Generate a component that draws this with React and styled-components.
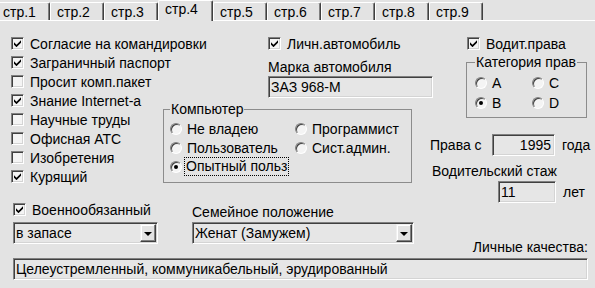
import React from 'react'
import styled, { createGlobalStyle } from 'styled-components'

const GlobalStyle = createGlobalStyle`
  html, body { margin: 0; padding: 0; background: #e3e3e3; }
  body {
    font-family: "Liberation Sans", Arial, sans-serif;
    font-size: 14px;
    color: #000;
  }
`

const Window = styled.div`
  width: 595px;
  height: 288px;
  overflow: hidden;
  background: #e3e3e3;
  display: flex;
  flex-direction: column;
`

const TabBar = styled.div`
  display: flex;
  align-items: flex-end;
  height: 21px;
  box-sizing: border-box;
  margin-left: -4px;
  border-bottom: 1px solid #fff;
`

const Tab = styled.div`
  position: relative;
  box-sizing: border-box;
  flex: none;
  width: ${p => (p.$active ? 55 : 54)}px;
  height: ${p => (p.$active ? 21 : 18)}px;
  margin-bottom: ${p => (p.$active ? '-1px' : '0')};
  padding: ${p => (p.$active ? '0' : '1px')} 0 0 6px;
  line-height: 16px;
  background: #e3e3e3;
  border-top: 1px solid #fff;
  border-left: 1px solid #fff;
  border-right: 1px solid #404040;
  border-radius: 2px 2px 0 0;
  box-shadow: inset -1px 0 #808080;
`

const Body = styled.div`
  flex: 1;
  display: flex;
  flex-direction: column;
  padding: 13px 7px 0 10px;
`

const TopSection = styled.div`
  display: flex;
  height: 169px;
`

const Column = styled.div`
  display: flex;
  flex-direction: column;
  flex: none;
  width: ${p => p.$w}px;
`

const CheckRow = styled.div`
  display: flex;
  align-items: center;
  gap: 6px;
  height: ${p => p.$h || 19}px;
  padding-left: ${p => p.$indent || 0}px;
  white-space: nowrap;
`

const Box = styled.span`
  flex: none;
  width: 13px;
  height: 13px;
  box-sizing: border-box;
  display: flex;
  align-items: center;
  justify-content: center;
  background: #f4f4f4;
  border: 1px solid;
  border-color: #808080 #fff #fff #808080;
  box-shadow: inset 1px 1px #404040, inset -1px -1px #d4d4d4;
`

const Label = styled.div`
  line-height: 16px;
  white-space: nowrap;
  margin-top: ${p => p.$top || 0}px;
  margin-left: ${p => p.$left || 0}px;
  width: ${p => (p.$w ? `${p.$w}px` : 'auto')};
  flex: none;
  text-align: ${p => (p.$right ? 'right' : 'left')};
`

const Field = styled.div`
  box-sizing: border-box;
  flex: none;
  height: 22px;
  width: ${p => (p.$w ? `${p.$w}px` : 'auto')};
  margin-top: ${p => p.$top || 0}px;
  margin-left: ${p => p.$left || 0}px;
  padding: 0 3px 0 2px;
  line-height: 20px;
  white-space: nowrap;
  overflow: hidden;
  text-align: ${p => (p.$right ? 'right' : 'left')};
  background: #e6e6e6;
  border: 1px solid;
  border-color: #808080 #fff #fff #808080;
  box-shadow: inset 1px 1px #404040, inset -1px -1px #d4d4d4;
`

const ComboField = styled(Field)`
  display: flex;
  align-items: center;
  justify-content: space-between;
  padding: 1px 1px 1px 2px;
`

const DropButton = styled.span`
  flex: none;
  box-sizing: border-box;
  width: 16px;
  height: 18px;
  display: flex;
  align-items: center;
  justify-content: center;
  background: #e3e3e3;
  border: 1px solid;
  border-color: #f0f0f0 #404040 #404040 #f0f0f0;
  box-shadow: inset -1px -1px #808080, inset 1px 1px #fff;

  &::after {
    content: '';
    border-left: 4px solid transparent;
    border-right: 4px solid transparent;
    border-top: 4px solid #000;
    margin-top: 1px;
  }
`

const Group = styled.fieldset`
  box-sizing: border-box;
  margin: ${p => p.$top || 0}px 0 0 ${p => p.$left || 0}px;
  width: ${p => p.$w}px;
  height: ${p => p.$h}px;
  padding: ${p => p.$pt || 2}px 0 0 ${p => p.$pl}px;
  border: 1px solid #8c8c8c;
  min-width: 0;

  legend {
    padding: 0 1px;
    line-height: 15px;
  }
`

const RadioGrid = styled.div`
  display: grid;
  grid-template-columns: ${p => p.$col}px auto;
  grid-auto-rows: ${p => p.$row}px;
`

const RadioRow = styled.div`
  display: flex;
  align-items: center;
  gap: 5px;
  white-space: nowrap;
`

const Circle = styled.span`
  flex: none;
  width: 12px;
  height: 12px;
  box-sizing: border-box;
  border-radius: 50%;
  display: flex;
  align-items: center;
  justify-content: center;
  background: #f4f4f4;
  border: 1px solid;
  border-color: #808080 #fff #fff #808080;
  box-shadow: inset 1px 1px #404040;

  &::after {
    content: '';
    display: ${p => (p.$on ? 'block' : 'none')};
    width: 4px;
    height: 4px;
    border-radius: 50%;
    background: #000;
  }
`

const Focus = styled.span`
  margin-left: -2px;
  padding: 1px 1px;
  line-height: 15px;
  outline: 1px dotted #000;
`

const InlineRow = styled.div`
  display: flex;
  align-items: center;
  gap: ${p => p.$gap ?? 7}px;
  margin-top: ${p => p.$top || 0}px;
  margin-left: ${p => p.$left || 0}px;
`

const BottomRow = styled.div`
  display: flex;
`

function Check({ on, children, h, indent }) {
  return (
    <CheckRow $h={h} $indent={indent}>
      <Box>
        {on && (
          <svg width="7" height="7" viewBox="0 0 7 7">
            <polygon points="0,2.3 2.5,4.8 7,0.3 7,2.7 2.5,7.2 0,4.7" fill="#000" />
          </svg>
        )}
      </Box>
      <span>{children}</span>
    </CheckRow>
  )
}

function Radio({ on, children }) {
  return (
    <RadioRow>
      <Circle $on={on} />
      {children}
    </RadioRow>
  )
}

function Combo({ w, top, left, children }) {
  return (
    <ComboField $w={w} $top={top} $left={left}>
      <span>{children}</span>
      <DropButton />
    </ComboField>
  )
}

const tabs = ['стр.1', 'стр.2', 'стр.3', 'стр.4', 'стр.5', 'стр.6', 'стр.7', 'стр.8', 'стр.9']

const options = [
  ['Согласие на командировки', true],
  ['Заграничный паспорт', true],
  ['Просит комп.пакет', false],
  ['Знание Internet-a', true],
  ['Научные труды', false],
  ['Офисная АТС', false],
  ['Изобретения', false],
  ['Курящий', true],
]

export default function App() {
  return (
    <Window>
      <GlobalStyle />
      <TabBar>
        {tabs.map((t, i) => (
          <Tab key={t} $active={i === 3}>{t}</Tab>
        ))}
      </TabBar>
      <Body>
        <TopSection>
          <Column $w={152}>
            {options.map(([text, on]) => (
              <Check key={text} on={on} indent={1}>{text}</Check>
            ))}
          </Column>

          <Column $w={271}>
            <Check on indent={106}>Личн.автомобиль</Check>
            <Label $top={6} $left={106}>Марка автомобиля</Label>
            <Field $w={165} $top={1} $left={106}>ЗАЗ 968-M</Field>
            <Group $w={249} $h={81} $top={4} $left={1} $pl={6}>
              <legend>Компьютер</legend>
              <RadioGrid $col={125} $row={19}>
                <Radio>Не владею</Radio>
                <Radio>Программист</Radio>
                <Radio>Пользователь</Radio>
                <Radio>Сист.админ.</Radio>
                <Radio on><Focus>Опытный польз</Focus></Radio>
              </RadioGrid>
            </Group>
          </Column>

          <Column $w={155}>
            <Check on indent={34}>Водит.права</Check>
            <Group $w={121} $h={63} $top={2} $left={33} $pl={8} $pt={3}>
              <legend>Категория прав</legend>
              <RadioGrid $col={57} $row={20}>
                <Radio>A</Radio>
                <Radio>C</Radio>
                <Radio on>B</Radio>
                <Radio>D</Radio>
              </RadioGrid>
            </Group>
            <InlineRow $top={16} $left={-3} $gap={0}>
              <Label $w={62}>Права с</Label>
              <Field $w={63} $right>1995</Field>
              <Label $left={7}>года</Label>
            </InlineRow>
            <Label $top={7} $left={-1}>Водительский стаж</Label>
            <InlineRow $top={2} $left={65}>
              <Field $w={58}>11</Field>
              <Label>лет</Label>
            </InlineRow>
          </Column>
        </TopSection>

        <BottomRow>
          <Column $w={148}>
            <Check on h={13} indent={3}>Военнообязанный</Check>
            <Combo w={145} top={6} left={3}>в запасе</Combo>
          </Column>
          <Column $w={256}>
            <Label $top={1} $left={34}>Семейное положение</Label>
            <Combo w={222} top={2} left={34}>Женат (Замужем)</Combo>
          </Column>
        </BottomRow>
        <Label $top={-5} $right>Личные качества:</Label>
        <Field $top={3} $left={3}>Целеустремленный, коммуникабельный, эрудированный</Field>
      </Body>
    </Window>
  )
}
